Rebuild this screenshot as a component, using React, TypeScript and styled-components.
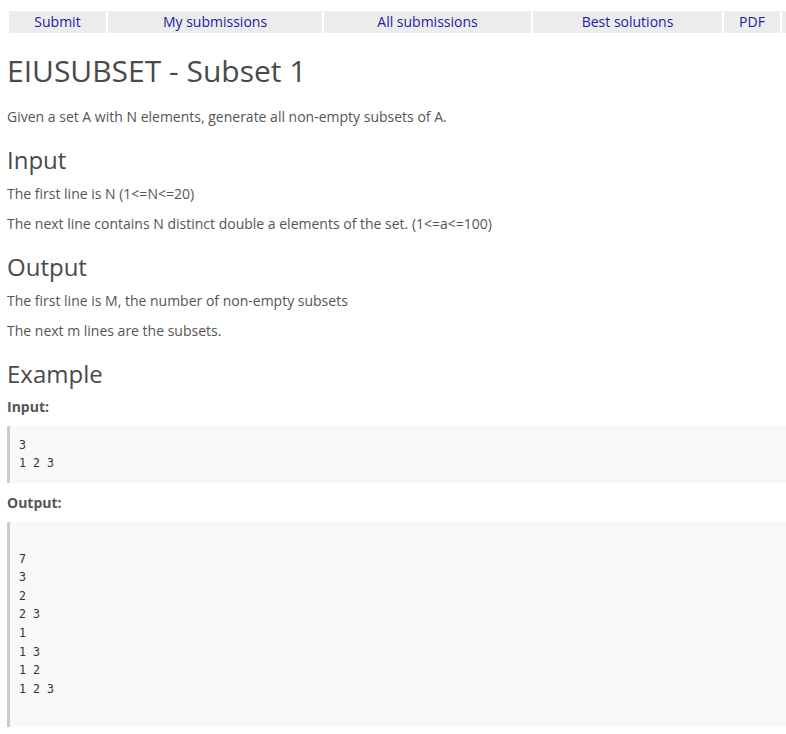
import React from "react";
import styled, { createGlobalStyle } from "styled-components";

const Global = createGlobalStyle`
  html, body { margin: 0; padding: 0; background: #fff; overflow-x: hidden; }
  body { font-family: "Open Sans", "Liberation Sans", sans-serif; font-size: 14px; line-height: 20px; color: #555; }
`;

const Page = styled.div`
  padding: 11px 0 40px 7px;
`;

const Nav = styled.nav`
  display: flex;
  gap: 2px;
  padding-left: 2px;
  white-space: nowrap;
`;

const Tab = styled.a<{ $w: number }>`
  flex: none;
  width: ${(p) => p.$w}px;
  height: 22px;
  line-height: 22px;
  background: #ececec;
  color: #1d1aa6;
  font-size: 14px;
  text-align: center;
  text-decoration: none;
`;

const Title = styled.h1`
  margin: 20px 0 0;
  font-size: 30px;
  line-height: 1.2;
  font-weight: 400;
  color: #4a4a4a;
`;

const Para = styled.p`
  margin: 0 0 10px;
`;

const Lead = styled(Para)`
  margin-top: 18px;
`;

const Heading = styled.h2`
  margin: 19px 0 9px;
  font-size: 24px;
  line-height: 1.2;
  font-weight: 400;
  color: #4a4a4a;
`;

const Label = styled.div`
  font-weight: 700;
  margin: 0 0 9px;
`;

const Pre = styled.pre`
  margin: 0 0 10px;
  padding: 9.5px 9px;
  background: #f8f8f8;
  border-left: 3px solid #ccc;
  font-family: "DejaVu Sans Mono", "Liberation Mono", monospace;
  font-size: 11.6px;
  line-height: 18.6px;
  color: #333;
`;

const tabs: [string, number][] = [
  ["Submit", 97],
  ["My submissions", 214],
  ["All submissions", 207],
  ["Best solutions", 189],
  ["PDF", 56],
  ["", 60],
];

export default function App() {
  return (
    <Page>
      <Global />
      <Nav>
        {tabs.map(([t, w], i) => (
          <Tab key={i} $w={w} href="#">
            {t}
          </Tab>
        ))}
      </Nav>
      <Title>EIUSUBSET - Subset 1</Title>
      <Lead>Given a set A with N elements, generate all non-empty subsets of A.</Lead>
      <Heading>Input</Heading>
      <Para>The first line is N (1&lt;=N&lt;=20)</Para>
      <Para>The next line contains N distinct double a elements of the set. (1&lt;=a&lt;=100)</Para>
      <Heading>Output</Heading>
      <Para>The first line is M, the number of non-empty subsets</Para>
      <Para>The next m lines are the subsets.</Para>
      <Heading>Example</Heading>
      <Label>Input:</Label>
      <Pre>{"3\n1 2 3"}</Pre>
      <Label>Output:</Label>
      <Pre>{"\n7\n3\n2\n2 3\n1\n1 3\n1 2\n1 2 3\n "}</Pre>
    </Page>
  );
}
